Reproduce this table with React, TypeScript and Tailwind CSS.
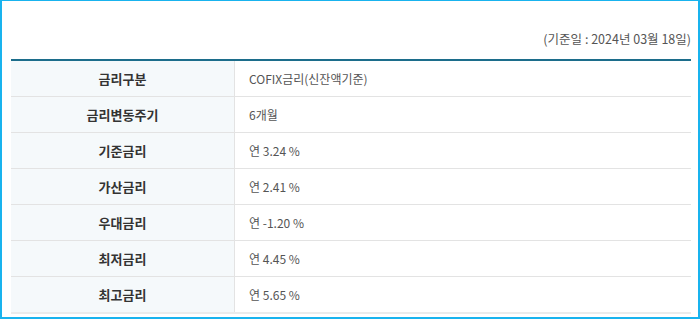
const rows: [string, string][] = [
  ['금리구분', 'COFIX금리(신잔액기준)'],
  ['금리변동주기', '6개월'],
  ['기준금리', '연 3.24 %'],
  ['가산금리', '연 2.41 %'],
  ['우대금리', '연 -1.20 %'],
  ['최저금리', '연 4.45 %'],
  ['최고금리', '연 5.65 %'],
];

export default function App() {
  return (
    <div
      className="w-[700px] h-[319px] bg-white border-l-2 border-t border-r-2 border-b-2 border-[#19b3ee] pl-[9px] pr-[7px] pt-[29px]"
      style={{ fontFamily: '"Noto Sans CJK KR", "Noto Sans", sans-serif' }}
    >
      <p className="text-right text-[12.5px] leading-[18px] text-[#555]">
        (기준일 : 2024년 03월 18일)
      </p>
      <div className="mt-[11px] border-t-2 border-[#1c6d8b]">
        {rows.map(([label, value], i) => {
          const last = i === rows.length - 1;
          return (
            <div
              key={label}
              className={
                last
                  ? 'flex h-[37px] border-b-2 border-[#ebebeb]'
                  : 'flex h-[36px] border-b border-[#e3e3e3]'
              }
            >
              <div className="w-[224px] shrink-0 flex items-center justify-center bg-[#f5f9fb] border-r border-[#e3e3e3] text-[13px] font-bold text-[#333]">
                {label}
              </div>
              <div className="flex-1 flex items-center pl-[14px] text-[12px] text-[#555]">
                {value}
              </div>
            </div>
          );
        })}
      </div>
    </div>
  );
}
